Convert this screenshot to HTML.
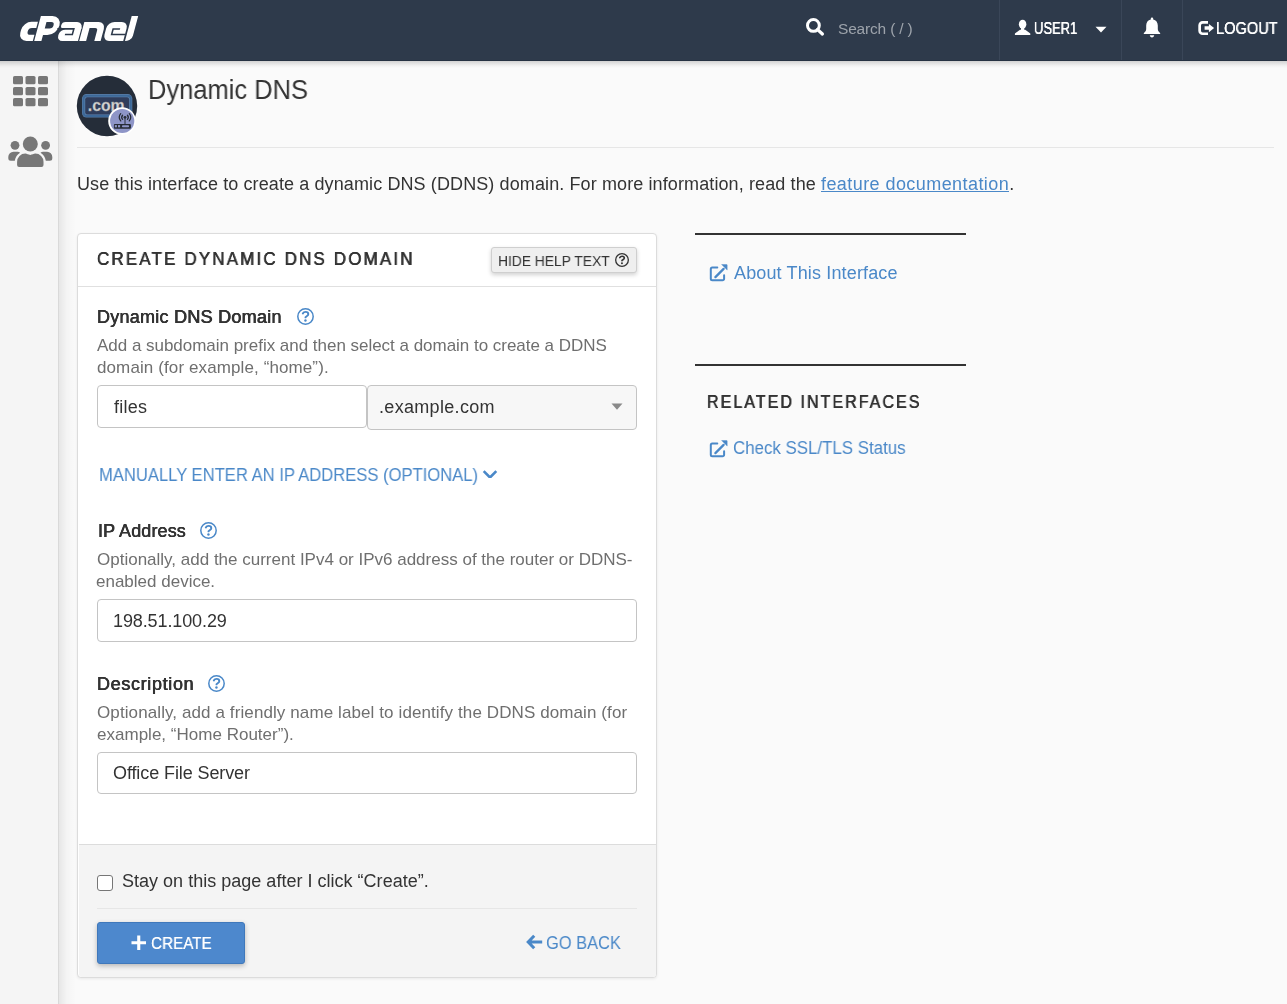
<!DOCTYPE html>
<html><head><meta charset="utf-8">
<style>
*{box-sizing:border-box;margin:0;padding:0}
html,body{width:1287px;height:1004px;overflow:hidden}
body{font-family:"Liberation Sans",sans-serif;background:#fafafa;color:#333;position:relative}
.abs{position:absolute}
.t{position:absolute;white-space:nowrap;line-height:1;will-change:transform}
#hdr{left:0;top:0;width:1287px;height:61px;background:#2e3a4b}
#hdrsh{left:0;top:61px;width:1287px;height:7px;background:linear-gradient(rgba(0,0,0,.16),rgba(0,0,0,.1) 30%,rgba(0,0,0,.03) 70%,rgba(0,0,0,0))}
.sep{top:0;width:1px;height:60px;background:#3a4658}
#side{left:0;top:61px;width:59px;height:943px;background:#f5f5f5;border-right:1px solid #d9d9d9}
#sidesh{left:59px;top:61px;width:17px;height:943px;background:linear-gradient(90deg,rgba(0,0,0,.08),rgba(0,0,0,.025) 45%,rgba(0,0,0,0))}
.inp{position:absolute;background:#fff;border:1px solid #c4c4c4;border-radius:4px}
</style></head><body>
<div id="hdr" class="abs"></div>
<div class="abs" style="left:0;top:60px;width:1287px;height:1px;background:#263242"></div>
<div class="abs sep" style="left:999px"></div>
<div class="abs sep" style="left:1121px"></div>
<div class="abs sep" style="left:1182px"></div>
<div id="side" class="abs"></div>
<div id="hdrsh" class="abs"></div>
<div id="sidesh" class="abs"></div>
<svg class="abs" style="left:0;top:0" width="160" height="60" viewBox="0 0 160 60">
<g transform="translate(0,41) skewX(-15) translate(0,-41)" fill="#fff">
<path d="M26.4 21.8H32.8V28H28.5A3.4 3.4 0 0 0 28.5 34.8H32.8V41H26.4A8.3 8.3 0 0 1 18.1 32.7V30.1A8.3 8.3 0 0 1 26.4 21.8Z"/>
<path d="M34.2 16H45.8A9.5 9.5 0 0 1 45.8 35H41.4V41H34.2ZM41.4 22V28.5H46.1A3.25 3.25 0 0 0 46.1 22Z" fill-rule="evenodd"/>
<path d="M60.4 21.9H72A6 6 0 0 1 78 27.9V28.7H60.4A3.4 3.4 0 0 1 60.4 21.9Z"/>
<rect x="70.5" y="27.5" width="7.5" height="13.5"/>
<path d="M62.2 29.4H71V41H62.2A5.4 5.4 0 0 1 56.8 35.6V34.8A5.4 5.4 0 0 1 62.2 29.4Z"/>
<path d="M79.2 21.9H93.6A7 7 0 0 1 100.6 28.9V41H94.3V30.6A2.6 2.6 0 0 0 91.7 28H86.1V41H79.2Z"/>
<path d="M109.5 21.9H116.7A6.5 6.5 0 0 1 123.2 28.4V41H109A6.2 6.2 0 0 1 102.8 34.8V28.6A6.7 6.7 0 0 1 109.5 21.9Z"/>
<path d="M125 16H131.5V35.4A5.6 5.6 0 0 1 125.9 41H125Z"/>
</g>
<g transform="translate(0,41) skewX(-15) translate(0,-41)" fill="none" stroke="#2e3a4b" stroke-width="1.6">
<path d="M54 28.8H70.6V34.5H63.2"/>
<path d="M123.3 34.5H109.9V29H116.8"/>
</g>
</svg>

<div class="abs" style="left:77px;top:147px;width:1197px;height:1px;background:#e6e6e6"></div>
<div class="abs" style="left:821px;top:191px;width:188px;height:1.3px;background:#4a88c8"></div>

<!-- panel -->
<div class="abs" style="left:77px;top:233px;width:580px;height:745px;background:#fff;border:1px solid #dcdcdc;border-radius:4px;box-shadow:0 1px 3px rgba(0,0,0,.07)"></div>
<div class="abs" style="left:78px;top:286px;width:578px;height:1px;background:#e0e0e0"></div>
<div class="abs" style="left:79px;top:844px;width:577px;height:133px;background:#f4f4f4;border-top:1px solid #dcdcdc;border-radius:0 0 3px 3px"></div>
<div class="abs" style="left:97px;top:908px;width:540px;height:1px;background:#e6e6e6"></div>

<!-- hide help button -->
<div class="abs" style="left:491px;top:247px;width:146px;height:26px;background:#efefef;border:1px solid #cfcfcf;border-radius:3px;box-shadow:0 2px 4px rgba(0,0,0,.18)"></div>

<!-- inputs -->
<div class="inp" style="left:97px;top:385px;width:270px;height:43px"></div>
<div class="inp" style="left:367px;top:385px;width:270px;height:45px;background:#f7f7f7"></div>
<div class="inp" style="left:97px;top:599px;width:540px;height:43px"></div>
<div class="inp" style="left:97px;top:752px;width:540px;height:42px"></div>

<!-- checkbox -->
<div class="abs" style="left:97px;top:875px;width:16px;height:16px;background:#fff;border:1.6px solid #767676;border-radius:3px"></div>

<!-- create button -->
<div class="abs" style="left:97px;top:922px;width:148px;height:42px;background:#4d88cd;border:1px solid #3f78bb;border-radius:3px;box-shadow:0 2px 5px rgba(0,0,0,.25)"></div>

<!-- right column lines -->
<div class="abs" style="left:695px;top:233px;width:271px;height:2px;background:#333"></div>
<div class="abs" style="left:695px;top:364px;width:271px;height:2px;background:#333"></div>

<svg class="abs" style="left:805px;top:17px" width="20" height="20" viewBox="0 0 20 20">
<circle cx="8.4" cy="8.4" r="5.9" fill="none" stroke="#fff" stroke-width="3"/>
<path d="M12.6 12.6L17.4 17" stroke="#fff" stroke-width="3.3" stroke-linecap="round"/></svg>
<svg class="abs" style="left:1014px;top:19px" width="17" height="17" viewBox="0 0 17 17">
<ellipse cx="8.6" cy="5.3" rx="3.75" ry="4.6" fill="#fff"/>
<rect x="7" y="8.6" width="3.2" height="2.6" fill="#fff"/>
<path d="M6 10.7H11.2L16 14.3Q16.3 14.6 16.3 15V15.9H0.9V15Q0.9 14.6 1.2 14.3Z" fill="#fff"/></svg>
<svg class="abs" style="left:1095px;top:26px" width="12" height="7" viewBox="0 0 12 7"><path d="M0.5 0.8H11.5L6 6.6Z" fill="#fff"/></svg>
<svg class="abs" style="left:1142px;top:17px" width="20" height="21" viewBox="0 0 20 21">
<path d="M10 0.5c.8 0 1.2.6 1.2 1.3v.6c2.9.6 4.6 3 4.6 6v3.6c0 1.6 1 2.8 2.2 3.9c.4.4.3 1.1-.3 1.1H2.3c-.6 0-.7-.7-.3-1.1c1.2-1.1 2.2-2.3 2.2-3.9V8.4c0-3 1.7-5.4 4.6-6v-.6C8.8 1.1 9.2.5 10 .5z" fill="#fff"/>
<path d="M7.8 18.2h4.4c0 1.2-1 2.2-2.2 2.2s-2.2-1-2.2-2.2z" fill="#fff"/></svg>
<svg class="abs" style="left:1197px;top:20px" width="18" height="16" viewBox="0 0 18 16">
<path d="M11 2.45H5.65A3 3 0 0 0 2.65 5.45V10.75A3 3 0 0 0 5.65 13.75H11" fill="none" stroke="#fff" stroke-width="2.7"/>
<path d="M7.6 6.3H11.9V3.9L17.1 8.05L11.9 12.2V9.8H7.6Z" fill="#fff"/></svg>
<svg class="abs" style="left:13px;top:75.5px" width="35" height="31" viewBox="0 0 35 31"><rect x="0.0" y="0.0" width="10" height="8.3" rx="1.6" fill="#777"/><rect x="12.5" y="0.0" width="10" height="8.3" rx="1.6" fill="#777"/><rect x="25.0" y="0.0" width="10" height="8.3" rx="1.6" fill="#777"/><rect x="0.0" y="11.0" width="10" height="8.3" rx="1.6" fill="#777"/><rect x="12.5" y="11.0" width="10" height="8.3" rx="1.6" fill="#777"/><rect x="25.0" y="11.0" width="10" height="8.3" rx="1.6" fill="#777"/><rect x="0.0" y="22.0" width="10" height="8.3" rx="1.6" fill="#777"/><rect x="12.5" y="22.0" width="10" height="8.3" rx="1.6" fill="#777"/><rect x="25.0" y="22.0" width="10" height="8.3" rx="1.6" fill="#777"/></svg>
<svg class="abs" style="left:5px;top:130px" width="50" height="42" viewBox="0 0 50 42">
<circle cx="25.3" cy="14" r="7.5" fill="#777"/>
<circle cx="10" cy="15.3" r="4.4" fill="#777"/>
<circle cx="40.6" cy="15.3" r="4.4" fill="#777"/>
<path d="M12.1 35V31.8A8.2 8.2 0 0 1 20.3 23.6C21.9 23.6 23.4 24.9 25.3 24.9C27.2 24.9 28.7 23.6 30.3 23.6A8.2 8.2 0 0 1 38.5 31.8V35A2 2 0 0 1 36.5 37H14.1A2 2 0 0 1 12.1 35Z" fill="#777"/>
<path d="M5.8 30.8A2.5 2.5 0 0 1 3.3 28.3V27A5.2 5.2 0 0 1 8.5 21.8H12.6C13.5 21.8 14.4 22.2 15.1 22.8C12.2 24.5 10.4 27.3 9.8 30.8Z" fill="#777"/>
<path d="M44.8 30.8A2.5 2.5 0 0 0 47.3 28.3V27A5.2 5.2 0 0 0 42.1 21.8H38C37.1 21.8 36.2 22.2 35.5 22.8C38.4 24.5 40.2 27.3 40.8 30.8Z" fill="#777"/>
</svg>
<svg class="abs" style="left:76px;top:75px" width="62" height="62" viewBox="0 0 62 62">
<circle cx="31" cy="31" r="30.2" fill="#252d39"/>
<rect x="6" y="19.1" width="50.3" height="23.5" rx="4.5" fill="#5a7da6"/>
<rect x="6.6" y="19.7" width="49.1" height="22.3" rx="4" fill="#3c6898"/>
<rect x="8.6" y="21.7" width="45.1" height="18.3" rx="2.5" fill="#6287b0"/>
<rect x="9.2" y="22.3" width="43.9" height="17.1" rx="2" fill="#2f3d5c"/>
<text x="11.8" y="35.8" textLength="36.8" lengthAdjust="spacingAndGlyphs" font-family="Liberation Sans" font-weight="bold" font-size="17" fill="#d2d2d2" stroke="#9a9a9a" stroke-width="0.3">.com</text>
<circle cx="46" cy="46" r="13.8" fill="#fff"/>
<circle cx="46.2" cy="46" r="12.1" fill="#8e95c7"/>
<rect x="37.9" y="48.9" width="17" height="4.8" rx="1" fill="#272c36"/>
<rect x="38.8" y="50.1" width="2.1" height="2.2" fill="#8e95c7"/>
<rect x="42" y="50.1" width="2.1" height="2.2" fill="#8e95c7"/>
<rect x="45.9" y="50.2" width="7.2" height="2" rx="1" fill="#8e95c7"/>
<rect x="48.4" y="42.5" width="1.2" height="6.5" fill="#3a4050"/>
<circle cx="49" cy="42.3" r="1.4" fill="#272c36"/>
<path d="M46.55 40.24A3.2 3.2 0 0 0 46.55 44.36M51.45 40.24A3.2 3.2 0 0 1 51.45 44.36M44.71 38.7A5.6 5.6 0 0 0 44.71 45.9M53.29 38.7A5.6 5.6 0 0 1 53.29 45.9" fill="none" stroke="#272c36" stroke-width="1.3" stroke-linecap="round"/>
</svg>
<svg class="abs" style="left:296.6px;top:308px" width="17" height="17" viewBox="0 0 17 17">
<circle cx="8.5" cy="8.5" r="7.7" fill="none" stroke="#4a88c8" stroke-width="1.5"/>
<path d="M5.8 5.5C6.4 4.4 7.4 3.9 8.6 3.9C10.2 3.9 11.3 4.9 11.3 6.2C11.3 7.8 9.2 8.2 8.5 9.2V9.4" fill="none" stroke="#4a88c8" stroke-width="1.9" stroke-linecap="round" stroke-linejoin="round"/>
<circle cx="8.45" cy="12.5" r="1.2" fill="#4a88c8"/></svg>
<svg class="abs" style="left:199.5px;top:521.9px" width="17" height="17" viewBox="0 0 17 17">
<circle cx="8.5" cy="8.5" r="7.7" fill="none" stroke="#4a88c8" stroke-width="1.5"/>
<path d="M5.8 5.5C6.4 4.4 7.4 3.9 8.6 3.9C10.2 3.9 11.3 4.9 11.3 6.2C11.3 7.8 9.2 8.2 8.5 9.2V9.4" fill="none" stroke="#4a88c8" stroke-width="1.9" stroke-linecap="round" stroke-linejoin="round"/>
<circle cx="8.45" cy="12.5" r="1.2" fill="#4a88c8"/></svg>
<svg class="abs" style="left:208.3px;top:674.9px" width="17" height="17" viewBox="0 0 17 17">
<circle cx="8.5" cy="8.5" r="7.7" fill="none" stroke="#4a88c8" stroke-width="1.5"/>
<path d="M5.8 5.5C6.4 4.4 7.4 3.9 8.6 3.9C10.2 3.9 11.3 4.9 11.3 6.2C11.3 7.8 9.2 8.2 8.5 9.2V9.4" fill="none" stroke="#4a88c8" stroke-width="1.9" stroke-linecap="round" stroke-linejoin="round"/>
<circle cx="8.45" cy="12.5" r="1.2" fill="#4a88c8"/></svg>
<svg class="abs" style="left:615px;top:253.2px" width="14" height="14" viewBox="0 0 17 17">
<circle cx="8.5" cy="8.5" r="7.7" fill="none" stroke="#333" stroke-width="1.6"/>
<path d="M5.8 5.5C6.4 4.4 7.4 3.9 8.6 3.9C10.2 3.9 11.3 4.9 11.3 6.2C11.3 7.8 9.2 8.2 8.5 9.2V9.4" fill="none" stroke="#333" stroke-width="2.0" stroke-linecap="round" stroke-linejoin="round"/>
<circle cx="8.45" cy="12.5" r="1.2" fill="#333"/></svg>
<svg class="abs" style="left:482px;top:467px" width="16" height="11" viewBox="0 0 16 11"><path d="M1.7 4.2L8 10.5L14.3 4.2" fill="none" stroke="#4a88c8" stroke-width="2.6"/></svg>
<svg class="abs" style="left:611px;top:403px" width="12" height="7" viewBox="0 0 12 7"><path d="M0.5 0.5H11.5L6 6.8Z" fill="#8a8a8a"/></svg>
<svg class="abs" style="left:708.5px;top:263.5px" width="19" height="19" viewBox="0 0 19 19">
<path d="M8.3 3.6H3.3A1.5 1.5 0 0 0 1.8 5.1V14.8A1.5 1.5 0 0 0 3.3 16.3H13.6A1.5 1.5 0 0 0 15.1 14.8V11.2" fill="none" stroke="#4a88c8" stroke-width="2" stroke-linecap="round"/>
<path d="M6.4 13.1L14.6 4.9" stroke="#4a88c8" stroke-width="2.3" stroke-linecap="round"/>
<path d="M12.6 0.5H17.6A0.6 0.6 0 0 1 18.2 1.1V6.1Z" fill="#4a88c8" stroke="#4a88c8" stroke-width="0.4" stroke-linejoin="round"/></svg>
<svg class="abs" style="left:708.5px;top:439.5px" width="19" height="19" viewBox="0 0 19 19">
<path d="M8.3 3.6H3.3A1.5 1.5 0 0 0 1.8 5.1V14.8A1.5 1.5 0 0 0 3.3 16.3H13.6A1.5 1.5 0 0 0 15.1 14.8V11.2" fill="none" stroke="#4a88c8" stroke-width="2" stroke-linecap="round"/>
<path d="M6.4 13.1L14.6 4.9" stroke="#4a88c8" stroke-width="2.3" stroke-linecap="round"/>
<path d="M12.6 0.5H17.6A0.6 0.6 0 0 1 18.2 1.1V6.1Z" fill="#4a88c8" stroke="#4a88c8" stroke-width="0.4" stroke-linejoin="round"/></svg>
<svg class="abs" style="left:131px;top:934.5px" width="15.5" height="15.5" viewBox="0 0 16 16"><path d="M8 0.5V15.5M0.5 8H15.5" stroke="#fff" stroke-width="3.2"/></svg>
<svg class="abs" style="left:526px;top:934px" width="17" height="16" viewBox="0 0 17 16"><path d="M8.2 1.8L2.2 8L8.2 14.2M2.5 8H16.2" fill="none" stroke="#4a88c8" stroke-width="3"/></svg>
<div class="t" id="search" style="left:838.00px;top:21.38px;font-size:15.5px;color:#9da3ab;letter-spacing:-0.182px;">Search ( / )</div>
<div class="t" id="user1" style="left:1033.50px;top:20.30px;font-size:16.3px;color:#fff;transform:scaleX(0.7983);transform-origin:0 0;text-shadow:0.12px 0 0 currentColor,-0.12px 0 0 currentColor;">USER1</div>
<div class="t" id="logout" style="left:1216.40px;top:20.29px;font-size:16.2px;color:#fff;transform:scaleX(0.9026);transform-origin:0 0;text-shadow:0.12px 0 0 currentColor,-0.12px 0 0 currentColor;">LOGOUT</div>
<div class="t" id="title" style="left:148.00px;top:76.54px;font-size:27px;color:#333;transform:scaleX(0.944);transform-origin:0 0;">Dynamic DNS</div>
<div class="t" id="desc" style="left:77.00px;top:174.76px;font-size:18px;color:#333;letter-spacing:0.109px;">Use this interface to create a dynamic DNS (DDNS) domain. For more information, read the</div>
<div class="t" id="desc2" style="left:821.00px;top:174.76px;font-size:18px;color:#4a88c8;letter-spacing:0.429px;">feature documentation<span style="color:#333">.</span></div>
<div class="t" id="ptitle" style="left:96.80px;top:248.62px;font-size:19px;color:#333;letter-spacing:2.4px;transform:scaleX(0.8943);transform-origin:0 0;text-shadow:0.3px 0 0 currentColor,-0.3px 0 0 currentColor;">CREATE DYNAMIC DNS DOMAIN</div>
<div class="t" id="hide" style="left:498.40px;top:252.88px;font-size:15.5px;color:#333;transform:scaleX(0.8919);transform-origin:0 0;">HIDE HELP TEXT</div>
<div class="t" id="lbl1" style="left:97.30px;top:307.66px;font-size:18px;color:#333;letter-spacing:0.259px;text-shadow:0.3px 0 0 currentColor,-0.3px 0 0 currentColor;">Dynamic DNS Domain</div>
<div class="t" id="h1a" style="left:96.90px;top:337.01px;font-size:17px;color:#6f6f6f;letter-spacing:-0.022px;">Add a subdomain prefix and then select a domain to create a DDNS</div>
<div class="t" id="h1b" style="left:96.50px;top:359.21px;font-size:17px;color:#6f6f6f;letter-spacing:0.107px;">domain (for example, “home”).</div>
<div class="t" id="files" style="left:113.60px;top:397.76px;font-size:18px;color:#333;letter-spacing:0.25px;">files</div>
<div class="t" id="example" style="left:379.40px;top:397.66px;font-size:18px;color:#333;letter-spacing:0.317px;">.example.com</div>
<div class="t" id="manual" style="left:99.20px;top:465.76px;font-size:18px;color:#4a88c8;transform:scaleX(0.9222);transform-origin:0 0;">MANUALLY ENTER AN IP ADDRESS (OPTIONAL)</div>
<div class="t" id="lbl2" style="left:97.50px;top:521.86px;font-size:18px;color:#333;letter-spacing:0.122px;text-shadow:0.3px 0 0 currentColor,-0.3px 0 0 currentColor;">IP Address</div>
<div class="t" id="h2a" style="left:96.50px;top:550.91px;font-size:17px;color:#6f6f6f;letter-spacing:0.001px;">Optionally, add the current IPv4 or IPv6 address of the router or DDNS-</div>
<div class="t" id="h2b" style="left:96.30px;top:573.21px;font-size:17px;color:#6f6f6f;">enabled device.</div>
<div class="t" id="ip" style="left:113.30px;top:611.76px;font-size:18px;color:#333;letter-spacing:-0.107px;">198.51.100.29</div>
<div class="t" id="lbl3" style="left:97.20px;top:674.56px;font-size:18px;color:#333;letter-spacing:0.66px;text-shadow:0.3px 0 0 currentColor,-0.3px 0 0 currentColor;">Description</div>
<div class="t" id="h3a" style="left:96.50px;top:703.81px;font-size:17px;color:#6f6f6f;letter-spacing:0.101px;">Optionally, add a friendly name label to identify the DDNS domain (for</div>
<div class="t" id="h3b" style="left:96.50px;top:726.01px;font-size:17px;color:#6f6f6f;letter-spacing:0.014px;">example, “Home Router”).</div>
<div class="t" id="office" style="left:112.80px;top:763.56px;font-size:18px;color:#333;letter-spacing:-0.101px;">Office File Server</div>
<div class="t" id="stay" style="left:122.00px;top:871.66px;font-size:18px;color:#333;letter-spacing:0.015px;">Stay on this page after I click “Create”.</div>
<div class="t" id="create" style="left:150.60px;top:935.41px;font-size:17px;color:#fff;transform:scaleX(0.8966);transform-origin:0 0;text-shadow:0.1px 0 0 #fff;">CREATE</div>
<div class="t" id="goback" style="left:545.80px;top:933.56px;font-size:18px;color:#4a88c8;transform:scaleX(0.9135);transform-origin:0 0;">GO BACK</div>
<div class="t" id="about" style="left:733.90px;top:263.56px;font-size:18px;color:#4a88c8;letter-spacing:0.144px;">About This Interface</div>
<div class="t" id="related" style="left:707.00px;top:391.92px;font-size:19px;color:#333;letter-spacing:2.4px;transform:scaleX(0.8444);transform-origin:0 0;text-shadow:0.3px 0 0 currentColor,-0.3px 0 0 currentColor;">RELATED INTERFACES</div>
<div class="t" id="check" style="left:733.00px;top:439.36px;font-size:18px;color:#4a88c8;transform:scaleX(0.9379);transform-origin:0 0;">Check SSL/TLS Status</div>
</body></html>
